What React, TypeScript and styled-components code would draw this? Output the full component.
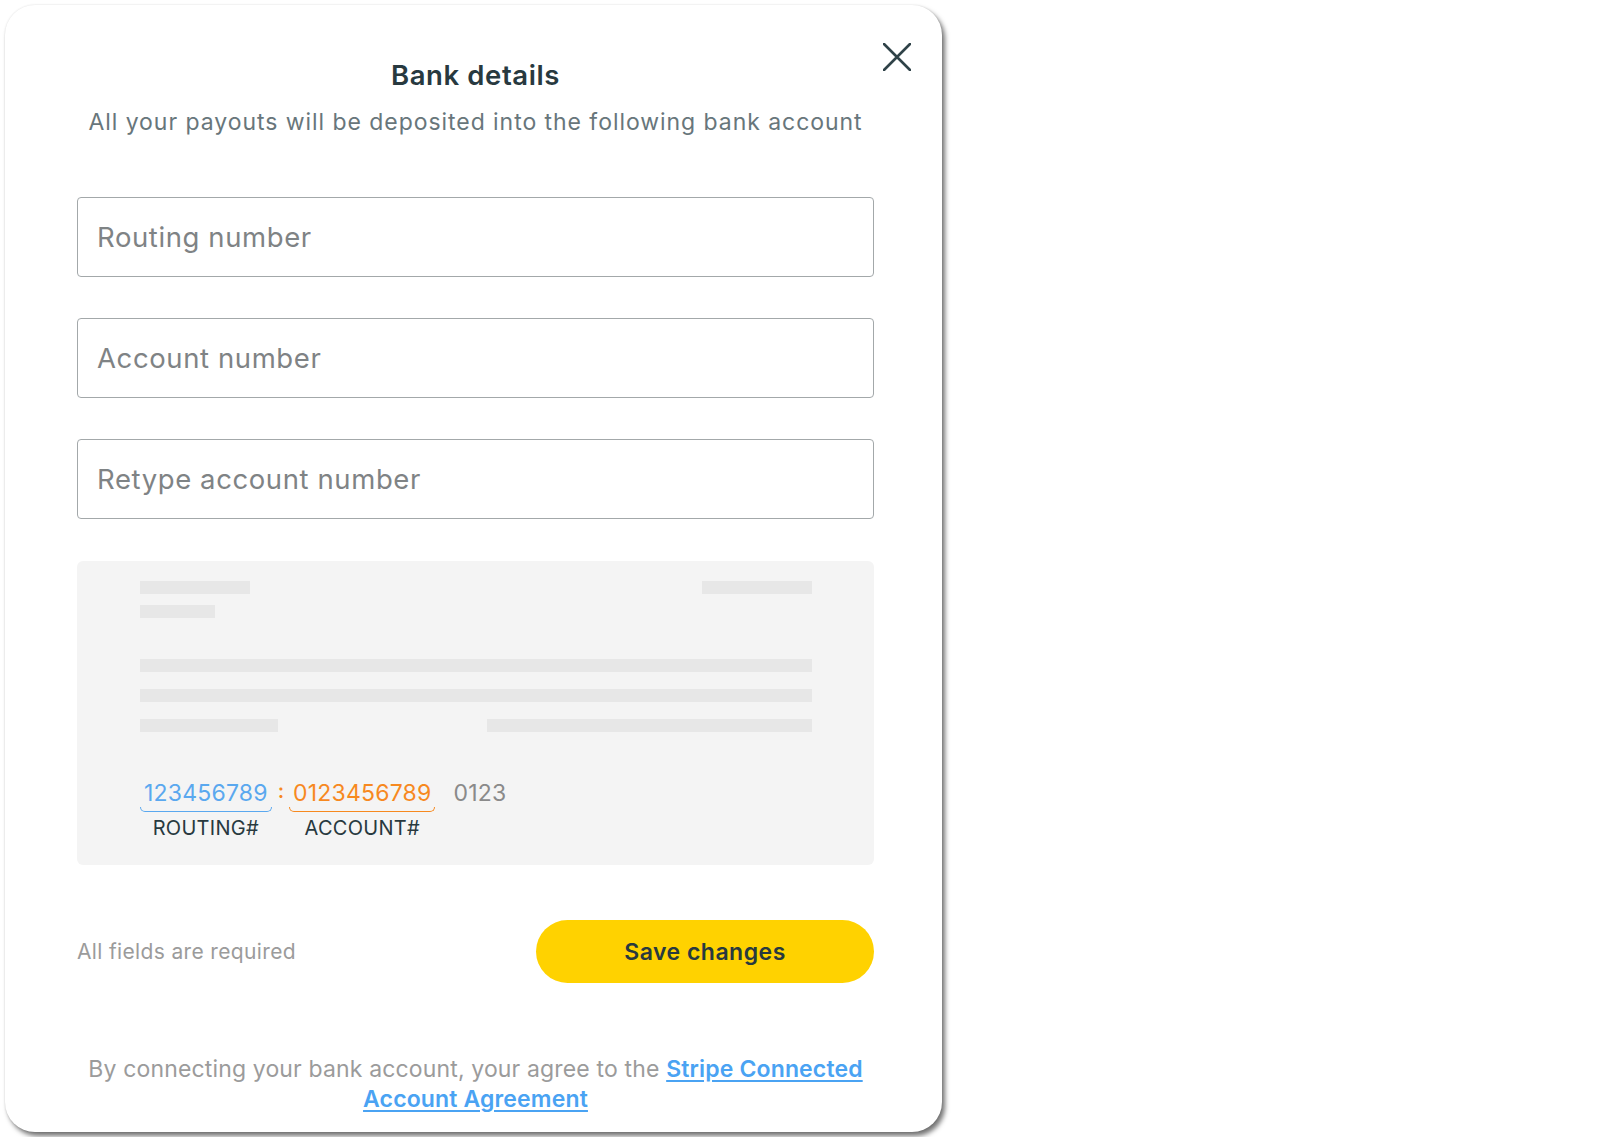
import React from 'react';
import styled, { createGlobalStyle } from 'styled-components';

const GlobalStyle = createGlobalStyle`
  html, body {
    margin: 0;
    padding: 0;
    background: #ffffff;
  }
  body {
    font-family: 'Inter', 'Open Sans', sans-serif;
  }
`;

const Page = styled.div`
  padding: 5px;
  width: 1600px;
  box-sizing: border-box;
`;

const Modal = styled.div`
  position: relative;
  width: 937px;
  box-sizing: border-box;
  background: #ffffff;
  border-radius: 30px;
  box-shadow: 3px 4px 5px rgba(0, 0, 0, 0.55), 0 0 2px rgba(0, 0, 0, 0.12);
  padding: 47px 68px 18px 72px;
  display: flex;
  flex-direction: column;
`;

const CloseButton = styled.button`
  position: absolute;
  top: 33px;
  right: 26px;
  width: 38px;
  height: 38px;
  padding: 0;
  border: none;
  background: transparent;
  display: flex;
  align-items: center;
  justify-content: center;
  cursor: pointer;
`;

const Title = styled.h1`
  margin: 0;
  text-align: center;
  font-size: 27.5px;
  font-weight: 600;
  line-height: 46px;
  color: #28393f;
  letter-spacing: 0.6px;
`;

const Subtitle = styled.p`
  margin: 0;
  text-align: center;
  font-size: 23px;
  line-height: 48px;
  color: #68767b;
  letter-spacing: 0.95px;
  white-space: nowrap;
`;

const Fields = styled.div`
  margin-top: 51px;
  display: flex;
  flex-direction: column;
  gap: 41px;
`;

const Input = styled.input`
  height: 80px;
  width: 100%;
  box-sizing: border-box;
  border: 1.5px solid #a3a8aa;
  border-radius: 4px;
  padding: 0 19px;
  font-family: inherit;
  font-size: 27.5px;
  color: #2b3d42;
  outline: none;
  letter-spacing: 0.6px;
  &::placeholder {
    color: #7f8385;
  }
`;

const Cheque = styled.div`
  margin-top: 42px;
  height: 304px;
  background: #f4f4f4;
  border-radius: 6px;
  padding: 20px 62px 0 63px;
  box-sizing: border-box;
  display: flex;
  flex-direction: column;
`;

const BarRow = styled.div<{ $gap?: number }>`
  display: flex;
  justify-content: space-between;
  margin-top: ${p => p.$gap ?? 0}px;
`;

const Bar = styled.div<{ $w?: number }>`
  height: 13px;
  width: ${p => (p.$w ? `${p.$w}px` : '100%')};
  background: #e7e7e7;
`;

const MicrLine = styled.div`
  margin-top: 47px;
  display: flex;
  align-items: flex-start;
`;

const MicrGroup = styled.div`
  display: flex;
  flex-direction: column;
  align-items: center;
`;

const Digits = styled.span<{ $color: string }>`
  font-size: 23px;
  line-height: 28px;
  color: ${p => p.$color};
  padding: 0 4px;
  letter-spacing: 0.2px;
`;

const Brace = styled.div<{ $color: string }>`
  align-self: stretch;
  height: 4px;
  border: 1px solid ${p => p.$color};
  border-top: none;
  border-radius: 0 0 6px 6px;
`;

const Colon = styled.span`
  font-size: 20px;
  line-height: 24px;
  color: #f7891f;
  margin: 0 5px 0 6px;
  font-weight: 600;
`;

const Check = styled.span`
  font-size: 23px;
  line-height: 28px;
  color: #8a8a8a;
  margin-left: 18px;
  letter-spacing: 0.2px;
`;

const Label = styled.span`
  margin-top: 5px;
  font-size: 20px;
  line-height: 22px;
  color: #28393f;
  letter-spacing: 0.3px;
`;

const Footer = styled.div`
  margin-top: 55px;
  display: flex;
  align-items: center;
  justify-content: space-between;
`;

const Hint = styled.span`
  font-size: 21px;
  color: #9b9b9b;
  letter-spacing: 0.35px;
`;

const SaveButton = styled.button`
  width: 338px;
  height: 63px;
  border: none;
  border-radius: 32px;
  background: #ffd200;
  font-family: inherit;
  font-size: 23px;
  font-weight: 600;
  color: #28393f;
  letter-spacing: 0.5px;
  cursor: pointer;
`;

const Legal = styled.p`
  margin: 71px 0 0;
  text-align: center;
  font-size: 23px;
  line-height: 30px;
  color: #9b9b9b;
  letter-spacing: 0.15px;
`;

const Link = styled.a`
  color: #4aa3f3;
  font-weight: 600;
  text-decoration: underline;
  text-underline-offset: 3px;
`;

export default function App() {
  return (
    <Page>
      <GlobalStyle />
      <Modal>
        <CloseButton aria-label="Close">
          <svg width="28" height="28" viewBox="0 0 28 28">
            <path d="M1 1 L27 27 M27 1 L1 27" stroke="#2f4248" strokeWidth="2.6" strokeLinecap="round" />
          </svg>
        </CloseButton>
        <Title>Bank details</Title>
        <Subtitle>All your payouts will be deposited into the following bank account</Subtitle>
        <Fields>
          <Input placeholder="Routing number" />
          <Input placeholder="Account number" />
          <Input placeholder="Retype account number" />
        </Fields>
        <Cheque>
          <BarRow>
            <Bar $w={110} />
            <Bar $w={110} />
          </BarRow>
          <BarRow $gap={11}>
            <Bar $w={75} />
          </BarRow>
          <BarRow $gap={41}>
            <Bar />
          </BarRow>
          <BarRow $gap={17}>
            <Bar />
          </BarRow>
          <BarRow $gap={17}>
            <Bar $w={138} />
            <Bar $w={325} />
          </BarRow>
          <MicrLine>
            <MicrGroup>
              <Digits $color="#5aa8ef">123456789</Digits>
              <Brace $color="#5aa8ef" />
              <Label>ROUTING#</Label>
            </MicrGroup>
            <Colon>:</Colon>
            <MicrGroup>
              <Digits $color="#f7891f">0123456789</Digits>
              <Brace $color="#f7891f" />
              <Label>ACCOUNT#</Label>
            </MicrGroup>
            <Check>0123</Check>
          </MicrLine>
        </Cheque>
        <Footer>
          <Hint>All fields are required</Hint>
          <SaveButton>Save changes</SaveButton>
        </Footer>
        <Legal>
          By connecting your bank account, your agree to the{' '}
          <Link href="#">
            Stripe Connected
            <br />
            Account Agreement
          </Link>
        </Legal>
      </Modal>
    </Page>
  );
}
